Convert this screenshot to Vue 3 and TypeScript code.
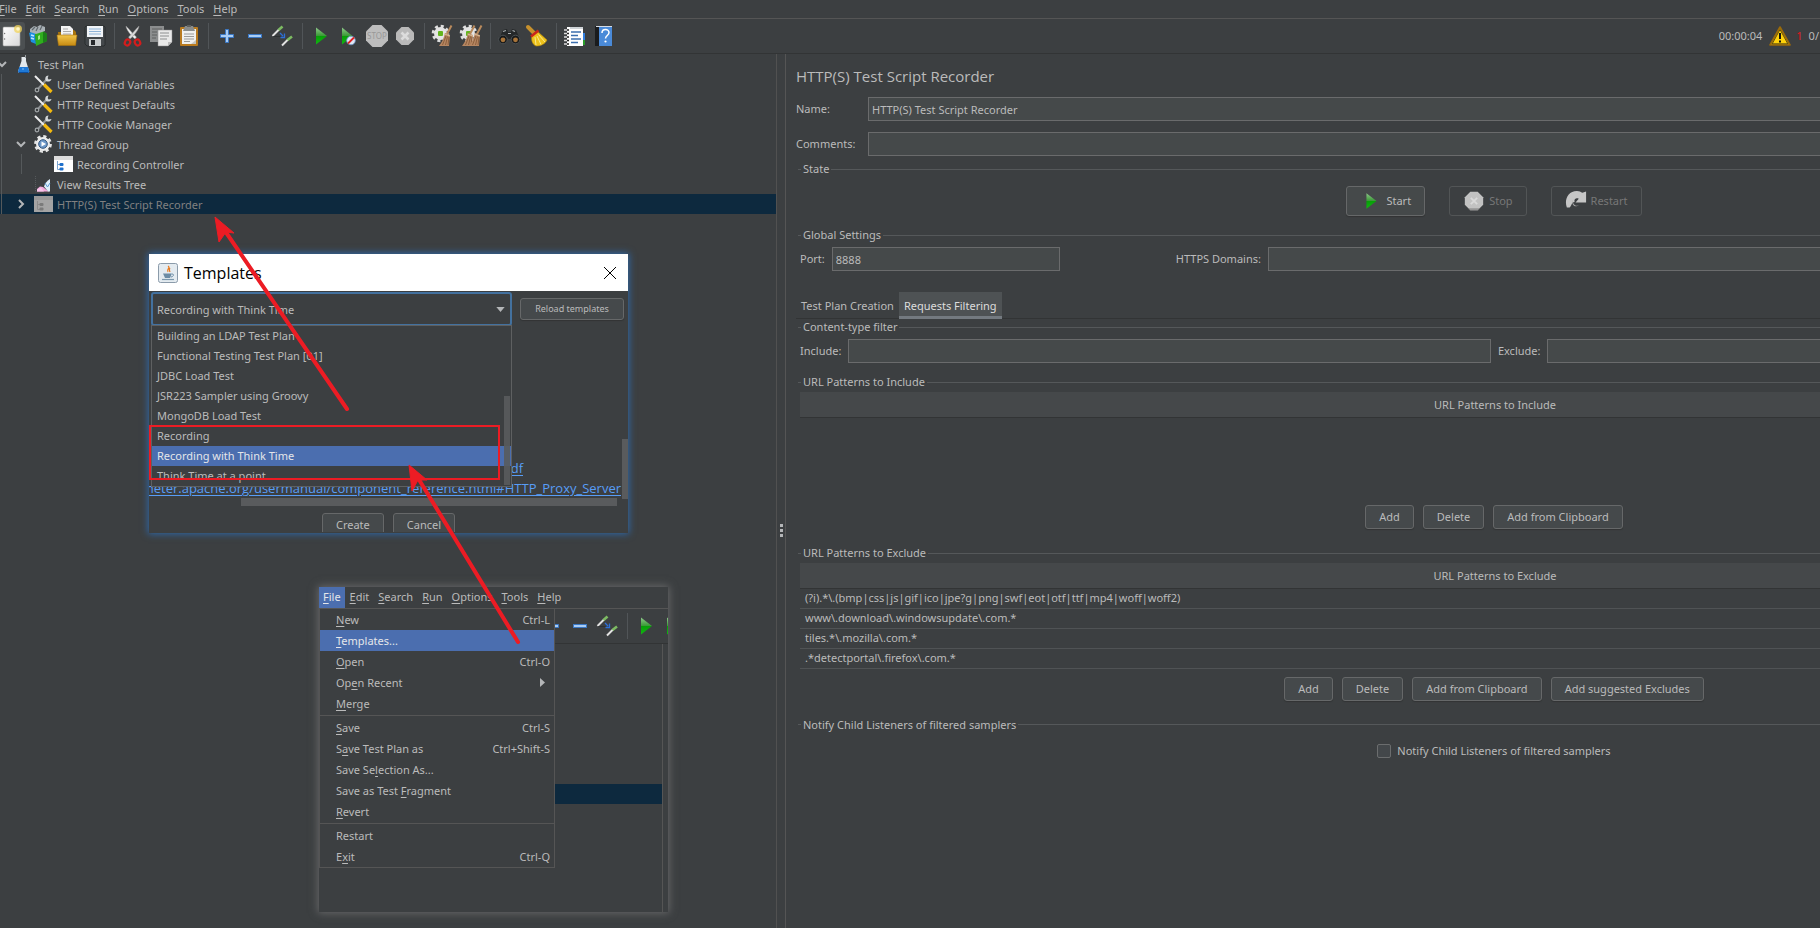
<script setup lang="ts">
import { ref } from 'vue'

interface MenuItem {
  label?: string
  shortcut?: string
  submenu?: boolean
  active?: boolean
  separator?: boolean
}

interface TreeNode {
  label: string
  icon: string
  level: number
  state?: 'open' | 'closed'
  selected?: boolean
}

const menus = ['&File', '&Edit', '&Search', '&Run', '&Options', '&Tools', '&Help']

const toolGroups = [
  [['new', 'New'], ['templates', 'Templates'], ['open', 'Open'], ['save', 'Save']],
  [['cut', 'Cut'], ['copy', 'Copy'], ['paste', 'Paste']],
  [['plus', 'Expand All'], ['minus', 'Collapse All'], ['toggle', 'Toggle']],
  [['play', 'Start'], ['playnow', 'Start no pauses'], ['stop', 'Stop'], ['shutdown', 'Shutdown']],
  [['clear', 'Clear'], ['clearall', 'Clear All']],
  [['search', 'Search'], ['broom', 'Reset Search']],
  [['functions', 'Function Helper'], ['help', 'Help']],
]

const innerToolGroups = [
  [['plus', 'Expand All'], ['minus', 'Collapse All'], ['toggle', 'Toggle']],
  [['play', 'Start'], ['playnow', 'Start no pauses']],
]

const tree: TreeNode[] = [
  { label: 'Test Plan', icon: 'flask', level: 0, state: 'open' },
  { label: 'User Defined Variables', icon: 'config', level: 1 },
  { label: 'HTTP Request Defaults', icon: 'config', level: 1 },
  { label: 'HTTP Cookie Manager', icon: 'config', level: 1 },
  { label: 'Thread Group', icon: 'gear', level: 1, state: 'open' },
  { label: 'Recording Controller', icon: 'controller', level: 2 },
  { label: 'View Results Tree', icon: 'chart', level: 1 },
  { label: 'HTTP(S) Test Script Recorder', icon: 'recorder', level: 1, state: 'closed', selected: true },
]

const fileMenu: MenuItem[] = [
  { label: '&New', shortcut: 'Ctrl-L' },
  { label: '&Templates...', active: true },
  { label: '&Open', shortcut: 'Ctrl-O' },
  { label: 'Op&en Recent', submenu: true },
  { label: '&Merge' },
  { separator: true },
  { label: '&Save', shortcut: 'Ctrl-S' },
  { label: 'S&ave Test Plan as', shortcut: 'Ctrl+Shift-S' },
  { label: 'Save Se&lection As...' },
  { label: 'Save as Test &Fragment' },
  { label: '&Revert' },
  { separator: true },
  { label: 'Restart' },
  { label: 'E&xit', shortcut: 'Ctrl-Q' },
]

const templates = [
  'Building an LDAP Test Plan',
  'Functional Testing Test Plan [01]',
  'JDBC Load Test',
  'JSR223 Sampler using Groovy',
  'MongoDB Load Test',
  'Recording',
  'Recording with Think Time',
  'Think Time at a point',
]

const excludes = [
  '(?i).*\\.(bmp|css|js|gif|ico|jpe?g|png|swf|eot|otf|ttf|mp4|woff|woff2)',
  'www\\.download\\.windowsupdate\\.com.*',
  'tiles.*\\.mozilla\\.com.*',
  '.*detectportal\\.firefox\\.com.*',
]

const chosen = ref('Recording with Think Time')
const name = ref('HTTP(S) Test Script Recorder')
const comments = ref('')
const port = ref('8888')
const domains = ref('')
const include = ref('')
const exclude = ref('')
const notify = ref(false)

// Splits "E&xit" into the text before, at and after its mnemonic.
function parts(label: string): string[] {
  const at = label.indexOf('&')
  if (at < 0) return [label, '', '']
  return [label.slice(0, at), label[at + 1], label.slice(at + 2)]
}
</script>

<template>
  <div class="app">
    <svg class="defs" aria-hidden="true">
      <defs>
        <linearGradient id="gGreen" x1="0" y1="0" x2="0" y2="1">
          <stop offset="0" stop-color="#8fc98b" /><stop offset="0.48" stop-color="#3c9a38" />
          <stop offset="0.52" stop-color="#079f07" /><stop offset="1" stop-color="#12b812" />
        </linearGradient>
        <linearGradient id="gPage" x1="0" y1="0" x2="1" y2="1">
          <stop offset="0" stop-color="#ffffff" /><stop offset="1" stop-color="#d8d8d8" />
        </linearGradient>
        <linearGradient id="gGold" x1="0" y1="0" x2="0" y2="1">
          <stop offset="0" stop-color="#f3c64b" /><stop offset="1" stop-color="#c68a12" />
        </linearGradient>
        <symbol id="i-new" viewBox="0 0 24 24">
          <rect x="4" y="3" width="17" height="19" rx="1" fill="url(#gPage)" stroke="#9a9a9a" stroke-width="0.6" />
          <circle cx="5.6" cy="9.500" r="0.7" fill="#777" /><circle cx="5.600" cy="15" r="0.7" fill="#777" />
          <circle cx="19" cy="5" r="4" fill="#f2d45c" opacity="0.75" /><circle cx="19" cy="5" r="1.800" fill="#fff8c8" />
        </symbol>
        <symbol id="i-templates" viewBox="0 0 24 24">
          <path d="M2 9 8 6 9 20 4 18Z" fill="#1c8fe0" /><path d="M8 10 16 7 20 10 20 17 9 22Z" fill="#2fae1e" />
          <path d="M16 7 20 10 20 17 16 19Z" fill="#1c7f18" />
          <path d="M3 5 7 2 10 3 13 1 18 3 18 7 9 10 3 8Z" fill="#a9b1b6" />
          <path d="M5 6 8 3M9 7 11 3M13 6 15 2" stroke="#5f676c" stroke-width="1.200" />
          <path d="M4 11 7 12M4 14 7 15" stroke="#bfe2ff" stroke-width="1.600" />
          <path d="M11 12 13 11 13 15 11 16Z" fill="#9be48b" />
        </symbol>
        <symbol id="i-open" viewBox="0 0 24 24">
          <path d="M3 8h3l1-2h12l2 2v13H4Z" fill="#a8740e" />
          <path d="M6 2h9l3 3v9H6Z" fill="#f4f4f4" /><path d="M8 5h5M8 7.500h8M8 10h8" stroke="#aaa" />
          <path d="M2 11h20l-1.500 10.500h-17Z" fill="url(#gGold)" stroke="#a8740e" stroke-width="0.6" />
        </symbol>
        <symbol id="i-save" viewBox="0 0 24 24">
          <path d="M3 2h18l1 1v18l-1 1H4l-2-2V3Z" fill="#44484b" stroke="#25282a" stroke-width="0.8" />
          <rect x="4" y="2" width="16" height="11" fill="#f2f5f8" /><path d="M6 5h12M6 7.500h12M6 10h12" stroke="#8fb4d8" />
          <rect x="6" y="15" width="12" height="7" fill="#c9cccd" /><rect x="8" y="16" width="4" height="5" fill="#26292b" />
        </symbol>
        <symbol id="i-cut" viewBox="0 0 24 24">
          <path d="M5 2c0 3 5 10 9 13l1.500-2C12 10 8 5 5 2Z" fill="#f1f1f1" stroke="#8a8a8a" stroke-width="0.5" />
          <path d="M18 2c0 3-5 10-9 13l-1.500-2C11 10 15 5 18 2Z" fill="#d8d8d8" stroke="#8a8a8a" stroke-width="0.5" />
          <ellipse cx="6.500" cy="18.500" rx="2.600" ry="3" fill="none" stroke="#d31d1d" stroke-width="2.200" transform="rotate(30 6.500 18.500)" />
          <ellipse cx="16.500" cy="18.500" rx="2.600" ry="3" fill="none" stroke="#d31d1d" stroke-width="2.200" transform="rotate(-30 16.500 18.500)" />
        </symbol>
        <symbol id="i-copy" viewBox="0 0 24 24">
          <rect x="1" y="2" width="14" height="16" fill="#8b8d8e" /><path d="M3 5h10M3 8h5M3 11h5M3 14h4" stroke="#5e6061" />
          <path d="M9 6h14v12l-4 4H9Z" fill="#e9e9e9" stroke="#8a8a8a" stroke-width="0.5" />
          <path d="M11 9h9M11 12h9M11 15h7" stroke="#8d8f90" /><path d="M23 18h-4v4Z" fill="#bcbcbc" />
        </symbol>
        <symbol id="i-paste" viewBox="0 0 24 24">
          <rect x="3" y="3" width="18" height="19" rx="1" fill="#b97a1e" /><rect x="5" y="5" width="14" height="15" fill="#f0f0ee" />
          <path d="M7 10h10M7 12.500h10M7 15h10M7 17.500h6" stroke="#9a9a98" />
          <path d="M8 2h8l2 5H6Z" fill="#8a8d8c" /><rect x="10" y="1" width="4" height="2" fill="#5e6160" />
          <path d="M19 16v4h-5Z" fill="#c4c4c0" />
        </symbol>
        <symbol id="i-plus" viewBox="0 0 24 24">
          <path d="M10.500 5.500h3v5H18.500v3h-5V18.500h-3v-5H5.500v-3h5Z" fill="#a9cdf5" stroke="#3b78c4" />
        </symbol>
        <symbol id="i-minus" viewBox="0 0 24 24">
          <rect x="5.500" y="10.500" width="13" height="3" fill="#a9cdf5" stroke="#3b78c4" />
        </symbol>
        <symbol id="i-toggle" viewBox="0 0 24 24">
          <path d="M1.500 12 8 5.500" stroke="#e2e2e2" stroke-width="2" /><path d="M7.500 6 11.500 2.500" stroke="#7dbb62" stroke-width="2.600" />
          <path d="M11 21.500 17 15.500" stroke="#e2e2e2" stroke-width="2" /><path d="M16.500 16 21 12.500" stroke="#7dbb62" stroke-width="2.600" />
          <path d="M2 12.500h8" stroke="#2a2d2f" stroke-width="0.8" />
          <path d="M9 9 12 12M13.500 9.500V13.500H9.500" fill="none" stroke="#2d6fd8" stroke-width="1.300" />
        </symbol>
        <symbol id="i-play" viewBox="0 0 24 24">
          <path d="M7 3.500 18 12 7 20.500Z" fill="url(#gGreen)" />
        </symbol>
        <symbol id="i-playnow" viewBox="0 0 24 24">
          <path d="M5 3.500 15.500 12 5 20.500Z" fill="url(#gGreen)" />
          <circle cx="14" cy="16.500" r="4.300" fill="#dfe8f5" stroke="#6f93c8" stroke-width="0.8" />
          <path d="M11 19.500 17 13.500" stroke="#df2222" stroke-width="1.800" />
        </symbol>
        <symbol id="i-stop" viewBox="0 0 24 24">
          <path d="M7.500 1h9L23 7.500v9L16.500 23h-9L1 16.500v-9Z" fill="#bdbdbd" />
          <text x="12" y="15" text-anchor="middle" font-size="8" fill="#989898">STOP</text>
        </symbol>
        <symbol id="i-shutdown" viewBox="0 0 24 24">
          <path d="M8.500 3h7L21 8.500v7L15.500 21h-7L3 15.500v-7Z" fill="#b9b9b9" />
          <path d="M8.500 8.500 15.500 15.500M15.500 8.500 8.500 15.500" stroke="#dcdcdc" stroke-width="2.600" />
        </symbol>
        <symbol id="i-cog" viewBox="0 0 24 24">
          <circle cx="9.500" cy="9.500" r="7.300" fill="none" stroke="#dedede" stroke-width="3" stroke-dasharray="3 2.730" />
          <circle cx="9.500" cy="9.500" r="6.500" fill="#e4e4e4" /><rect x="7" y="7" width="5" height="5" rx="1" fill="#63b51e" />
        </symbol>
        <symbol id="i-brush" viewBox="0 0 24 24">
          <path d="M20.500 1.500 16 10" stroke="#b98a5c" stroke-width="2" />
          <path d="M14 9 19 11 18 22 8 22C11 18 13 14 14 9Z" fill="#b58560" />
          <path d="M15 12 11.500 21M16.500 12.500 14.500 21M18 13 17 21" stroke="#7f5636" stroke-width="0.8" />
          <path d="M13.500 10 19 12" stroke="#d9bb98" />
        </symbol>
        <symbol id="i-clear" viewBox="0 0 24 24"><use href="#i-cog" /><use href="#i-brush" /></symbol>
        <symbol id="i-clearall" viewBox="0 0 24 24">
          <use href="#i-cog" /><use href="#i-brush" x="-5" /><use href="#i-brush" x="2" />
        </symbol>
        <symbol id="i-search" viewBox="0 0 24 24">
          <path d="M2 15 6 6l4-1 1 3h3l1-3 4 1 4 9-1 3-6 1-2-4h-4l-2 4-6-1Z" fill="#242729" />
          <circle cx="6" cy="15.500" r="4.300" fill="#17191a" stroke="#4c5154" /><circle cx="18.500" cy="15.500" r="4.300" fill="#17191a" stroke="#4c5154" />
          <circle cx="6" cy="15.800" r="2.400" fill="#a8743a" /><circle cx="18.500" cy="15.800" r="2.400" fill="#a8743a" />
          <path d="M6 7.500 9 6.500M15.500 6.500 18 7.500M11 9.500h3" stroke="#a9aeb1" stroke-width="1.200" />
        </symbol>
        <symbol id="i-broom" viewBox="0 0 24 24">
          <path d="M3 3 9 9" stroke="#c7912d" stroke-width="4" stroke-linecap="round" />
          <path d="M7 11 12 7 22 16C20 20 16 22 11 22 7 20 6 16 7 11Z" fill="#edc21b" stroke="#b98c0c" stroke-width="0.600" />
          <path d="M6 12.500 13.500 6.500" stroke="#c9261c" stroke-width="2.600" />
          <path d="M10 13 11 21M12 12 16 20.500M13.500 10.500 20 18" stroke="#fae98a" stroke-width="1" />
        </symbol>
        <symbol id="i-functions" viewBox="0 0 24 24">
          <path d="M19 9h3v7h-3Z" fill="#2f7ee0" /><path d="M19 16h3v5h-3Z" fill="#2a9c2a" />
          <rect x="4" y="3" width="16" height="19" fill="#fff" /><path d="M7 3h13v2H7Z" fill="#cfd4d8" />
          <path d="M1 6h5M1 9.500h5M1 13h5M1 16.500h5M1 20h5" stroke="#ddd" stroke-width="1.500" /><path d="M4 6h2M4 9.500h2M4 13h2M4 16.500h2M4 20h2" stroke="#222" stroke-width="1.500" />
          <path d="M8 8h10M8 11.500h7M8 15h10M8 18.500h7" stroke="#3c6fae" stroke-width="1.300" />
        </symbol>
        <symbol id="i-help" viewBox="0 0 24 24">
          <rect x="4" y="2" width="17" height="20" fill="#4a8ad8" /><rect x="4" y="2" width="4" height="20" fill="#1a1c1e" />
          <path d="M5 2.500h16" stroke="#d6dde6" />
          <path d="M11 9c0-4.500 7-4.500 7-.5 0 3-3.500 3-3.500 6" fill="none" stroke="#fff" stroke-width="1.500" /><circle cx="14.500" cy="17.500" r="1.100" fill="#fff" />
        </symbol>
        <symbol id="i-warning" viewBox="0 0 24 24">
          <path d="M12 3 22 21H2Z" fill="#fcc70c" stroke="#9a6a0a" stroke-width="1.600" stroke-linejoin="round" />
          <path d="M12 5.500 19.800 19.800H4.200Z" fill="#ffd20a" stroke="#1c1a10" stroke-width="0.700" />
          <path d="M12 9v6M12 16.500v2" stroke="#111" stroke-width="2" />
        </symbol>
        <symbol id="i-flask" viewBox="0 0 20 20">
          <path d="M7.500 3h4.500v4l3.300 10.500-1 1.500H5l-1-1.500L7.500 7Z" fill="#e3e8ec" />
          <path d="M5.300 13h8.700l1.300 4.500-1 1.500H5l-1-1.500Z" fill="#1f79d6" /><path d="M5 18.500h9.500" stroke="#0c4c9b" />
          <path d="M11.500 1v3" stroke="#9aa0a4" /><circle cx="9" cy="15" r="0.800" fill="#8cc6ff" />
        </symbol>
        <symbol id="i-config" viewBox="0 0 20 20">
          <path d="M14 5 4.500 15.500" stroke="#8e9294" stroke-width="2" />
          <circle cx="4" cy="16" r="1.800" fill="#3c3f41" stroke="#a2a6a8" stroke-width="1.200" />
          <path d="M15.500 1.500C12.500 1.500 11.500 4.500 13 7c2 1.300 4.800.5 5.500-2l-3 .5-.8-1.500Z" fill="#d3d6d8" />
          <path d="M2 2 11 11" stroke="#ececec" stroke-width="2" /><path d="M11 10.500 18.500 18" stroke="#f3b90f" stroke-width="3.200" />
        </symbol>
        <symbol id="i-gear" viewBox="0 0 20 20">
          <circle cx="10" cy="10" r="7.600" fill="none" stroke="#e6e6e6" stroke-width="2.600" stroke-dasharray="3.200 2.770" />
          <circle cx="10" cy="10" r="7" fill="#ececec" /><circle cx="10" cy="10" r="4.300" fill="#6d98c9" stroke="#33567f" />
          <path d="M8.500 7.500 13 10 8.500 12.500Z" fill="#fff" />
        </symbol>
        <symbol id="i-controller" viewBox="0 0 20 20">
          <rect x="1" y="2" width="19" height="16" fill="#fff" /><rect x="1" y="2" width="19" height="4" fill="#dcdcdc" />
          <path d="M4.500 7v8.500h3M4.500 10.500h3" fill="none" stroke="#7aa3cf" />
          <rect x="6.500" y="9" width="4" height="3" rx="1" fill="#1e6fcb" /><rect x="6.500" y="13.500" width="4" height="3" rx="1" fill="#1e6fcb" />
        </symbol>
        <symbol id="i-recorder" viewBox="0 0 20 20">
          <rect x="1" y="2" width="19" height="16" fill="#a4a4a4" /><rect x="1" y="2" width="19" height="4" fill="#989898" />
          <path d="M4.500 7v8.500h3M4.500 10.500h3" fill="none" stroke="#8b8b8b" />
          <rect x="6.500" y="9" width="4" height="3" rx="1" fill="#7a7a7a" /><rect x="6.500" y="13.500" width="4" height="3" rx="1" fill="#7a7a7a" />
        </symbol>
        <symbol id="i-chart" viewBox="0 0 20 20">
          <path d="M2.500 2v16h14" fill="none" stroke="#55595b" stroke-dasharray="1 1" />
          <path d="M4 17.500V15l3-2.500 3 .5 3 2.500 3 2Z" fill="#f3a9dd" /><path d="M4 17.500v-2l4-2 3 4Z" fill="#f7c6ea" />
          <path d="M17 5v12.500h-2l-4-5C12 9.500 14 6.500 17 5Z" fill="#dfeefa" /><path d="M12 9 14.500 13 17 9" fill="none" stroke="#5b9bd2" />
        </symbol>
        <symbol id="i-java" viewBox="0 0 20 20">
          <rect x="0.500" y="0.500" width="19" height="19" rx="2" fill="#e4ebf0" stroke="#8b9baa" />
          <path d="M10 3c3 2-2 3 0 6M12 5c-1 1-1 2 0 4" fill="none" stroke="#e8791c" stroke-width="1.200" />
          <path d="M5 10.500h9l-2 4.500H7Z" fill="#6c8ca5" /><path d="M4 16.500h12" stroke="#7c98ad" stroke-width="1.200" /><path d="M14 11c3 0 1 3-1 3" fill="none" stroke="#6c8ca5" />
        </symbol>
        <symbol id="i-stopdim" viewBox="0 0 24 24">
          <path d="M8 2h8l6 6v8l-6 6H8l-6-6V8Z" fill="#c2c2c2" /><path d="M5 20h14l-3 3H8Z" fill="#777" opacity="0.6" />
          <path d="M8.500 8.500 15.500 15.500M15.500 8.500 8.500 15.500" stroke="#dadada" stroke-width="2" />
        </symbol>
        <symbol id="i-restart" viewBox="0 0 24 24">
          <path d="M2 19C-1 11 3 1 13 1c3 0 4 1 6 2l4-1.500V13.500H11.500L15 9.500c-3-1.500-5.500.5-4.500 3.500C7 13 7.500 17 5 19Z" fill="#c6c6c6" />
          <path d="M9 10c-1.500 4 1 8 6 7-4 2.500-9-1-6-7Z" fill="#a9a9a9" />
        </symbol>
      </defs>
    </svg>

    <nav class="menubar" aria-label="Main menu">
      <button v-for="m in menus" :key="m" type="button">{{ parts(m)[0] }}<u>{{ parts(m)[1] }}</u>{{ parts(m)[2] }}</button>
    </nav>

    <header class="toolbar">
      <div v-for="(g, gi) in toolGroups" :key="gi" class="group">
        <button v-for="[id, title] in g" :key="id" type="button" :class="{ hot: id === 'new' }" :aria-label="title">
          <svg><use :href="'#i-' + id" /></svg>
        </button>
      </div>
      <div class="status">
        <span>00:00:04</span>
        <svg><use href="#i-warning" /></svg>
        <span class="errors">1</span>
        <span class="threads">0/</span>
      </div>
    </header>

    <main class="split">
      <section class="left">
        <ul class="tree">
          <li
            v-for="n in tree"
            :key="n.label"
            :class="['level' + n.level, { selected: n.selected }]"
          >
            <span class="twist">
              <svg v-if="n.state" viewBox="0 0 16 16">
                <path :d="n.state === 'open' ? 'M4 6 8 10 12 6' : 'M6 4 10 8 6 12'" />
              </svg>
            </span>
            <svg class="node"><use :href="'#i-' + n.icon" /></svg>
            <span class="label">{{ n.label }}</span>
          </li>
        </ul>

        <section class="dialog" aria-label="Templates">
          <header>
            <svg class="java"><use href="#i-java" /></svg>
            <h2>Templates</h2>
            <button type="button" aria-label="Close">
              <svg viewBox="0 0 14 14"><path d="M1 1 13 13M13 1 1 13" /></svg>
            </button>
          </header>
          <div class="chooser">
            <div class="combo">
              <select v-model="chosen" aria-label="Template">
                <option v-for="t in templates" :key="t">{{ t }}</option>
              </select>
              <svg viewBox="0 0 10 6"><path d="M0 0h10L5 6Z" /></svg>
            </div>
            <button type="button" class="btn small">Reload templates</button>
          </div>
          <div class="description">
            <a href="#pdf" class="pdf">df</a>
            <a href="#proxy" class="proxy">meter.apache.org/usermanual/component_reference.html#HTTP_Proxy_Server</a>
            <i class="vthumb"></i>
          </div>
          <i class="hthumb"></i>
          <div class="actions">
            <button type="button" class="btn">Create</button>
            <button type="button" class="btn">Cancel</button>
          </div>
          <ul class="options" role="listbox" aria-label="Templates list">
            <li v-for="t in templates" :key="t" role="option" :aria-selected="t === chosen" :class="{ active: t === chosen }">{{ t }}</li>
            <i class="othumb"></i>
          </ul>
        </section>

        <section class="window" aria-label="File menu">
          <nav class="menubar inner">
            <button v-for="(m, i) in menus" :key="m" type="button" :class="{ active: i === 0 }">{{ parts(m)[0] }}<u>{{ parts(m)[1] }}</u>{{ parts(m)[2] }}</button>
          </nav>
          <div class="toolbar inner">
            <div v-for="(g, gi) in innerToolGroups" :key="gi" class="group">
              <button v-for="[id, title] in g" :key="id" type="button" :aria-label="title">
                <svg><use :href="'#i-' + id" /></svg>
              </button>
            </div>
          </div>
          <div class="canvas"><i class="stripe"></i></div>
          <ul class="menu" role="menu">
            <li v-for="(it, i) in fileMenu" :key="i" :class="{ active: it.active, line: it.separator }" :role="it.separator ? 'separator' : 'menuitem'">
              <template v-if="it.label">
                <span>{{ parts(it.label)[0] }}<u>{{ parts(it.label)[1] }}</u>{{ parts(it.label)[2] }}</span>
                <span v-if="it.shortcut">{{ it.shortcut }}</span>
                <svg v-if="it.submenu" viewBox="0 0 5 9"><path d="M0 0 5 4.500 0 9Z" /></svg>
              </template>
            </li>
          </ul>
        </section>

        <svg class="marks" aria-hidden="true">
          <rect x="150" y="426" width="349" height="53" />
          <path class="shaft" d="M347 409 223 228M518 642 418 478" />
          <path class="head" d="M215 217 234 233 226 232 219 242ZM409 465 427 480 418 480 412 491Z" />
        </svg>
      </section>

      <div class="divider" role="separator"><i></i><i></i><i></i></div>

      <section class="right">
        <div class="panel">
          <h1>HTTP(S) Test Script Recorder</h1>
          <div class="field">
            <label for="name">Name:</label><input id="name" v-model="name" type="text" />
          </div>
          <div class="field">
            <label for="comments">Comments:</label><input id="comments" v-model="comments" type="text" />
          </div>

          <fieldset class="state">
            <legend>State</legend>
            <button type="button" class="btn big"><svg><use href="#i-play" /></svg>Start</button>
            <button type="button" class="btn big" disabled><svg><use href="#i-stopdim" /></svg>Stop</button>
            <button type="button" class="btn big" disabled><svg><use href="#i-restart" /></svg>Restart</button>
          </fieldset>

          <fieldset class="global">
            <legend>Global Settings</legend>
            <div class="line">
              <label for="port">Port:</label><input id="port" v-model="port" class="port" type="text" />
              <label for="domains">HTTPS Domains:</label><input id="domains" v-model="domains" type="text" />
            </div>
          </fieldset>

          <div class="tabs" role="tablist">
            <button type="button" role="tab" aria-selected="false">Test Plan Creation</button>
            <button type="button" role="tab" aria-selected="true" class="on">Requests Filtering</button>
          </div>

          <fieldset class="types">
            <legend>Content-type filter</legend>
            <div class="line">
              <label for="include">Include:</label><input id="include" v-model="include" type="text" />
              <label for="exclude">Exclude:</label><input id="exclude" v-model="exclude" type="text" />
            </div>
          </fieldset>

          <fieldset class="patterns">
            <legend>URL Patterns to Include</legend>
            <div class="grid">
              <table><thead><tr><th>URL Patterns to Include</th></tr></thead></table>
            </div>
            <div class="buttons">
              <button type="button" class="btn">Add</button>
              <button type="button" class="btn">Delete</button>
              <button type="button" class="btn">Add from Clipboard</button>
            </div>
          </fieldset>

          <fieldset class="patterns">
            <legend>URL Patterns to Exclude</legend>
            <div class="grid">
              <table>
                <thead><tr><th>URL Patterns to Exclude</th></tr></thead>
                <tbody><tr v-for="p in excludes" :key="p"><td>{{ p }}</td></tr></tbody>
              </table>
            </div>
            <div class="buttons">
              <button type="button" class="btn">Add</button>
              <button type="button" class="btn">Delete</button>
              <button type="button" class="btn">Add from Clipboard</button>
              <button type="button" class="btn">Add suggested Excludes</button>
            </div>
          </fieldset>

          <fieldset class="notify">
            <legend>Notify Child Listeners of filtered samplers</legend>
            <label class="check"><input v-model="notify" type="checkbox" />Notify Child Listeners of filtered samplers</label>
          </fieldset>
        </div>
      </section>
    </main>
  </div>
</template>

<style>
body {
  margin: 0;
  background: #3c3f41;
  overflow: hidden;
}
</style>

<style scoped>
* {
  box-sizing: border-box;
}
.app {
  min-height: 100vh;
  display: flex;
  flex-direction: column;
  background: #3c3f41;
  color: #bbbbbb;
  font: 11px/16px 'Noto Sans', 'Open Sans', sans-serif;
  overflow: hidden;
}
.defs {
  position: absolute;
  width: 0;
  height: 0;
}
button,
input,
select {
  font: inherit;
  color: inherit;
  margin: 0;
}
ul {
  list-style: none;
  margin: 0;
  padding: 0;
}
h1,
h2 {
  margin: 0;
  font-family: 'Open Sans', 'Noto Sans', sans-serif;
  font-weight: 400;
}
u {
  text-underline-offset: 2px;
}

.menubar {
  display: flex;
  gap: 1px;
  height: 19px;
  margin-left: -5px;
  border-bottom: 1px solid #555555;
}
.menubar button {
  border: 0;
  background: none;
  padding: 0 4px 1px;
}
.toolbar {
  display: flex;
  height: 35px;
  border-bottom: 1px solid #323435;
  align-items: center;
  padding-bottom: 1px;
}
.group {
  display: flex;
}
.group:first-child {
  margin-left: -3px;
}
.group + .group::before {
  content: '';
  width: 1px;
  height: 26px;
  margin: 1px 4px 0 5px;
  background: #515558;
}
.group button {
  display: grid;
  place-items: center;
  width: 28px;
  height: 28px;
  padding: 0;
  border: 0;
  border-radius: 3px;
  background: none;
}
.group button.hot {
  background: #4c5052;
}
.group svg,
.status svg {
  width: 24px;
  height: 24px;
}
.status {
  display: flex;
  align-items: center;
  margin-left: auto;
  padding-right: 1px;
}
.status svg {
  margin: 0 4px 0 6px;
}
.errors {
  color: #e0191f;
}
.threads {
  margin-left: 6px;
}

.split {
  flex: 1;
  display: flex;
  min-height: 0;
}
.left {
  position: relative;
  flex: 0 0 777px;
  border-right: 1px solid #515151;
}
.divider {
  flex: 0 0 8px;
  display: flex;
  flex-direction: column;
  justify-content: center;
  align-items: center;
  gap: 2px;
  padding-top: 78px;
}
.divider i {
  width: 3px;
  height: 3px;
  background: #b4b6b8;
}
.right {
  flex: 1;
  min-width: 0;
  border-left: 1px solid #555555;
  overflow: hidden;
}

.tree {
  position: relative;
}
.tree::before,
.tree::after {
  content: '';
  position: absolute;
  width: 1px;
  background: #55595b;
}
.tree::before {
  left: 1px;
  top: 20px;
  bottom: 0;
}
.tree::after {
  left: 21px;
  top: 100px;
  height: 20px;
}
.tree li {
  display: flex;
  align-items: center;
  height: 20px;
}
.tree .label {
  padding-top: 1px;
}
.level0 .twist {
  margin-left: -6px;
}
.level1 .twist {
  margin-left: 13px;
}
.level2 .twist {
  margin-left: 33px;
}
.twist {
  width: 16px;
  height: 16px;
}
.twist svg {
  display: block;
  width: 16px;
  height: 16px;
  fill: none;
  stroke: #b4b6b8;
  stroke-width: 2;
}
.node {
  width: 20px;
  height: 20px;
  margin: 0 4px;
}
.tree li.selected {
  background: #0d293e;
  color: #808080;
}

.dialog {
  position: absolute;
  left: 149px;
  top: 200px;
  width: 479px;
  height: 279px;
  background: #3c3f41;
  box-shadow: 0 0 7px 1px #2f68a8;
}
.dialog header {
  display: flex;
  align-items: center;
  height: 37px;
  padding: 0 11px 0 9px;
  background: #ffffff;
  color: #000000;
}
.java {
  width: 20px;
  height: 20px;
}
.dialog h2 {
  margin-left: 6px;
  font-size: 16px;
  line-height: 20px;
}
.dialog header button {
  margin-left: auto;
  border: 0;
  padding: 0;
  background: none;
  width: 14px;
  height: 14px;
}
.dialog header button svg {
  display: block;
  stroke: #000000;
}
.chooser {
  display: flex;
  align-items: center;
  gap: 8px;
  padding: 1px 4px 0 2px;
}
.combo {
  position: relative;
  flex: 1;
}
.combo select {
  display: block;
  appearance: none;
  width: 100%;
  height: 34px;
  padding: 1px 4px 0;
  border: 2px solid #43719f;
  border-radius: 3px;
  background: #3c3f41;
  outline: 0;
}
.combo svg {
  position: absolute;
  right: 7px;
  top: 15px;
  width: 9px;
  height: 5px;
  fill: #b4b6b8;
}
.btn {
  height: 24px;
  padding: 0 13px;
  border: 1px solid #666869;
  border-radius: 3px;
  background: #45494b;
  box-shadow: 0 1px 1px #323435;
  white-space: nowrap;
}
.btn.small {
  flex: 0 0 104px;
  height: 22px;
  padding: 0;
  font-size: 9px;
}
.description {
  position: relative;
  height: 173px;
  display: flex;
  flex-direction: column;
  justify-content: flex-end;
  align-items: flex-end;
  padding: 0 7px 1px 0;
  overflow: hidden;
  font-family: 'Open Sans', 'Noto Sans', sans-serif;
  font-size: 13px;
  line-height: 20px;
}
.description a {
  color: #589df6;
  text-underline-offset: 2px;
  white-space: nowrap;
}
.description .pdf {
  margin-right: 98px;
}
.vthumb,
.hthumb,
.othumb {
  background: #595b5d;
}
.vthumb {
  position: absolute;
  right: 0;
  bottom: 0;
  width: 6px;
  height: 60px;
}
.hthumb {
  display: block;
  height: 8px;
  margin: -1px 11px 0 92px;
}
.actions {
  display: flex;
  justify-content: center;
  gap: 9px;
  height: 19px;
  margin-top: 7px;
  overflow: hidden;
}
.options {
  position: absolute;
  left: 2px;
  top: 71px;
  width: 361px;
  height: 162px;
  border: 1px solid #5e6061;
  background: #3c3f41;
  overflow: hidden;
}
.options li {
  height: 20px;
  padding-left: 5px;
  line-height: 20px;
}
.options .active,
.menu .active,
.inner .active {
  background: #4b6eaf;
  color: #e4e6ea;
}
.othumb {
  position: absolute;
  right: 1px;
  top: 70px;
  width: 6px;
  bottom: 1px;
  opacity: 0.9;
}

.window {
  position: absolute;
  left: 319px;
  top: 533px;
  width: 349px;
  height: 325px;
  display: flex;
  flex-direction: column;
  background: #3c3f41;
  box-shadow: 0 0 8px 1px #68696a;
}
.menubar.inner {
  flex: none;
  height: 22px;
  margin-left: 0;
}
.toolbar.inner {
  flex: none;
  padding-left: 222px;
  overflow: hidden;
}
.canvas {
  flex: 1;
  margin-right: 5px;
  border-right: 1px solid #555555;
  padding-top: 140px;
}
.stripe {
  display: block;
  height: 20px;
  background: #0d293e;
}
.menu {
  position: absolute;
  left: 0;
  top: 21px;
  width: 236px;
  border: 1px solid #555555;
  background: #3c3f41;
}
.menu li {
  display: flex;
  align-items: center;
  justify-content: space-between;
  height: 21px;
  padding: 0 4px 0 16px;
  line-height: 20px;
}
.menu .line {
  height: 1px;
  margin: 1px 0;
  background: #555555;
}
.menu svg {
  width: 5px;
  height: 9px;
  margin-right: 5px;
  fill: #b4b6b8;
}

.marks {
  position: absolute;
  left: 0;
  top: -54px;
  width: 100%;
  height: 700px;
  pointer-events: none;
}
.marks rect {
  fill: none;
  stroke: #ec1c24;
  stroke-width: 2;
}
.shaft {
  fill: none;
  stroke: #ec1c24;
  stroke-width: 4;
  stroke-linecap: round;
}
.head {
  fill: #ec1c24;
  stroke: #ec1c24;
  stroke-width: 1;
}

/* The form is wider than its viewport and runs on past the window's edge. */
.panel {
  margin-right: -370px;
  padding: 11px 0 0 10px;
}
h1 {
  font-size: 15px;
  line-height: 22px;
  margin-bottom: 10px;
}
.field {
  display: flex;
  align-items: center;
  margin-bottom: 11px;
}
.field label {
  width: 72px;
}
.field + .field {
  margin-bottom: 5px;
}
input[type='text'] {
  flex: 1;
  min-width: 0;
  height: 24px;
  padding: 0 3px;
  border: 1px solid #6a6b6c;
  background: #45494a;
  outline: 0;
}
fieldset {
  min-width: 0;
  margin: 0 0 0 2px;
  padding: 0;
  border: 0;
  border-top: 1px solid #55585a;
}
legend {
  margin-left: 3px;
  padding: 0 2px;
}
.line {
  display: flex;
  align-items: center;
  gap: 7px;
  padding: 4px 0 0 2px;
}
.state {
  display: flex;
  justify-content: center;
  gap: 24px;
  padding-top: 9px;
  margin-bottom: 11px;
}
.btn.big {
  display: flex;
  align-items: center;
  gap: 4px;
  height: 30px;
  background: #45494a;
}
.btn.big svg {
  width: 22px;
  height: 22px;
}
.btn:disabled {
  color: #777777;
  border-color: #525556;
  background: none;
  box-shadow: none;
}
.global {
  margin-bottom: 21px;
}
.line .port {
  flex: 0 0 228px;
  margin-right: 109px;
}
.tabs {
  display: flex;
  height: 27px;
  box-shadow: inset 0 -1px #323435;
}
.tabs button {
  padding: 0 5px;
  border: 0;
  background: none;
}
.tabs .on {
  padding-top: 3px;
  background: #4e5254;
  color: #dddddd;
  border-bottom: 3px solid #747a80;
}
.types {
  margin-bottom: 11px;
}
.patterns {
  margin-bottom: 16px;
}
.grid {
  min-height: 107px;
  padding: 2px 0 0 2px;
}
table {
  width: 100%;
  border-collapse: collapse;
}
th {
  height: 25px;
  padding: 2px 0 0;
  background: #45484a;
  border-bottom: 1px solid #323435;
  font-weight: 400;
}
td {
  height: 20px;
  padding: 0 5px;
  border-bottom: 1px solid #505355;
}
.buttons {
  display: flex;
  justify-content: center;
  gap: 9px;
  margin-top: 8px;
}
.notify {
  display: flex;
  justify-content: center;
  padding-top: 10px;
}
.check {
  display: flex;
  align-items: center;
  gap: 6px;
}
.check input {
  appearance: none;
  width: 14px;
  height: 14px;
  border: 1px solid #6b6d6e;
  border-radius: 2px;
  background: #43474a;
}
</style>
